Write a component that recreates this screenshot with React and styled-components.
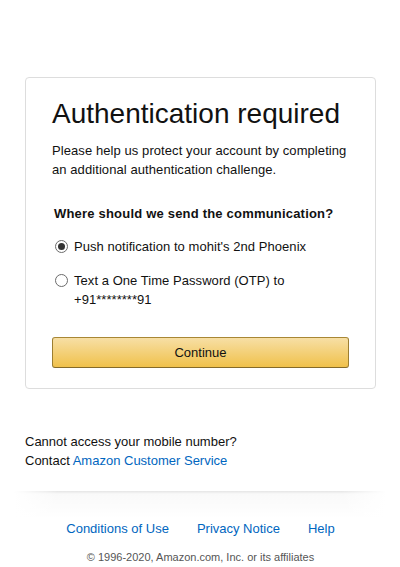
import React, { useState } from "react";
import styled, { createGlobalStyle } from "styled-components";

const GlobalStyle = createGlobalStyle`
  html, body {
    margin: 0;
    padding: 0;
    background: #ffffff;
  }
  body {
    font-family: "Liberation Sans", Arial, sans-serif;
    font-size: 13px;
    line-height: 19px;
    color: #111;
  }
`;

const Page = styled.div`
  width: 400px;
  padding: 77px 24px 0 25px;
  box-sizing: border-box;
`;

const Card = styled.div`
  border: 1px solid #ddd;
  border-radius: 4px;
  padding: 19px 26px 20px 26px;
`;

const Title = styled.h1`
  margin: 0 0 10px;
  font-size: 28px;
  font-weight: 400;
  line-height: 34px;
  color: #111;
`;

const Intro = styled.p`
  margin: 0 0 25px;
  letter-spacing: 0.08px;
`;

const Question = styled.div`
  font-weight: 700;
  padding-left: 2px;
  margin-bottom: 14px;
  letter-spacing: 0.2px;
`;

const Option = styled.label`
  display: flex;
  align-items: flex-start;
  padding-left: 2px;
  margin-bottom: ${(p) => (p.$last ? "0" : "15px")};
  cursor: pointer;
  letter-spacing: 0.05px;
`;

const Radio = styled.span`
  flex: none;
  width: 11px;
  height: 11px;
  margin: 3px 6px 0 1px;
  border: 1px solid #6b6b6b;
  border-radius: 50%;
  display: flex;
  align-items: center;
  justify-content: center;
  background: #fff;
  &::after {
    content: "";
    width: 7px;
    height: 7px;
    border-radius: 50%;
    background: ${(p) => (p.$checked ? "#333" : "transparent")};
  }
`;

const Button = styled.button`
  display: block;
  width: 100%;
  height: 31px;
  margin-top: 28px;
  border: 1px solid;
  border-color: #a88734 #9c7e31 #846a29;
  border-radius: 3px;
  background: linear-gradient(to bottom, #f7dfa5, #f0c14b);
  font-family: inherit;
  font-size: 13px;
  color: #111;
  cursor: pointer;
`;

const Help = styled.div`
  margin-top: 43px;
`;

const Link = styled.a`
  color: #0066c0;
  text-decoration: none;
`;

const Divider = styled.div`
  margin: 21px -10px 0 -11px;
  height: 28px;
  background: linear-gradient(to bottom, rgba(0, 0, 0, 0.1), rgba(0, 0, 0, 0.025) 3px, transparent);
  position: relative;
  &::after {
    content: "";
    position: absolute;
    inset: 0;
    background: linear-gradient(to right, #fff, rgba(255, 255, 255, 0) 12%, rgba(255, 255, 255, 0) 88%, #fff);
  }
`;

const FooterLinks = styled.div`
  display: flex;
  justify-content: center;
  gap: 28px;
  font-size: 13px;
`;

const Copyright = styled.div`
  text-align: center;
  font-size: 11px;
  color: #555;
  margin-top: 10px;
`;

export default function App() {
  const [choice, setChoice] = useState("push");
  return (
    <>
      <GlobalStyle />
      <Page>
        <Card>
          <Title>Authentication required</Title>
          <Intro>
            Please help us protect your account by completing an additional authentication challenge.
          </Intro>
          <Question>Where should we send the communication?</Question>
          <Option onClick={() => setChoice("push")}>
            <Radio $checked={choice === "push"} />
            <span>Push notification to mohit's 2nd Phoenix</span>
          </Option>
          <Option $last onClick={() => setChoice("otp")}>
            <Radio $checked={choice === "otp"} />
            <span>
              Text a One Time Password (OTP) to
              <br />
              +91********91
            </span>
          </Option>
          <Button>Continue</Button>
        </Card>
        <Help>
          Cannot access your mobile number?
          <br />
          Contact <Link href="#">Amazon Customer Service</Link>
        </Help>
        <Divider />
        <FooterLinks>
          <Link href="#">Conditions of Use</Link>
          <Link href="#">Privacy Notice</Link>
          <Link href="#">Help</Link>
        </FooterLinks>
        <Copyright>© 1996-2020, Amazon.com, Inc. or its affiliates</Copyright>
      </Page>
    </>
  );
}
